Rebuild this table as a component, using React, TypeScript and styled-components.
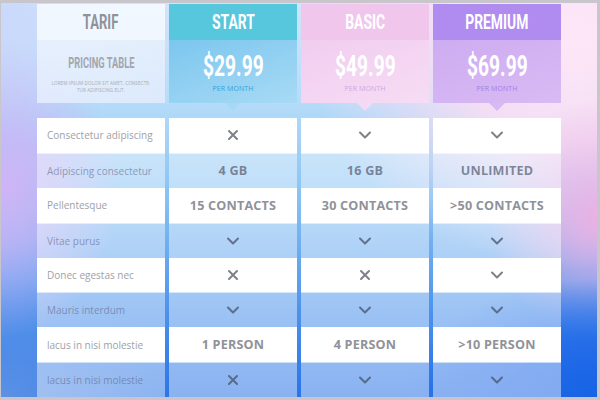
import styled, { createGlobalStyle } from 'styled-components';

const GlobalStyle = createGlobalStyle`
  html, body {
    margin: 0;
    padding: 0;
  }
  body {
    font-family: 'Open Sans', 'Liberation Sans', sans-serif;
  }
`;

const Page = styled.div`
  width: 600px;
  height: 400px;
  box-sizing: border-box;
  border-style: solid;
  border-color: #c9c6cb;
  border-width: 3px 3px 3px 1px;
  overflow: hidden;
  padding: 1px 0 0 36px;
  background:
    radial-gradient(ellipse 32% 30% at 100% 100%, #1663e6 0%, rgba(32, 104, 232, 0.85) 45%, rgba(40, 110, 232, 0) 100%),
    radial-gradient(ellipse 18% 30% at 100% 55%, rgba(238, 176, 228, 0.95) 0%, rgba(238, 176, 228, 0) 100%),
    radial-gradient(ellipse 45% 60% at 96% 8%, #fde7f7 0%, rgba(250, 222, 244, 0.9) 45%, rgba(248, 214, 242, 0) 100%),
    radial-gradient(ellipse 20% 38% at 0% 47%, rgba(208, 180, 246, 1) 0%, rgba(208, 180, 246, 0.7) 40%, rgba(208, 180, 246, 0) 100%),
    radial-gradient(ellipse 30% 30% at 0% 100%, #5c92e6 0%, rgba(92, 146, 230, 0) 100%),
    radial-gradient(ellipse 20% 25% at 0% 5%, #c9d8fb 0%, rgba(201, 216, 251, 0) 100%),
    linear-gradient(180deg, #d2e4fb 0%, #b6dcf9 25%, #86c1f3 50%, #4d93ec 78%, #2a73e6 100%);
`;

const Table = styled.div`
  display: grid;
  grid-template-columns: repeat(4, 128px);
  column-gap: 4px;
`;

type Plan = 'tarif' | 'start' | 'basic' | 'premium';

const titleBg: Record<Plan, string> = {
  tarif: 'rgba(244, 249, 255, 0.9)',
  start: '#56c7dc',
  basic: '#f0c6ec',
  premium: '#b08bf0',
};

const priceBg: Record<Plan, string> = {
  tarif: 'linear-gradient(160deg, rgba(236, 243, 254, 0.85), rgba(226, 236, 252, 0.85))',
  start: 'linear-gradient(160deg, #7cc6ee, #a8daf5)',
  basic: 'linear-gradient(160deg, #f1cdf0, #f6dcf4)',
  premium: 'linear-gradient(160deg, #cdacf1, #d9baf3)',
};

const tipColor: Record<Plan, string> = {
  tarif: 'transparent',
  start: '#a6d9f5',
  basic: '#f5daf3',
  premium: '#d8b9f3',
};

const perMonthColor: Record<Plan, string> = {
  tarif: '#9aa0aa',
  start: '#3a9fd9',
  basic: '#d2a6df',
  premium: '#a47de6',
};

const PlanHead = styled.div`
  display: flex;
  flex-direction: column;
  margin-bottom: 15px;
`;

const PlanTitle = styled.div<{ plan: Plan }>`
  height: 36px;
  display: flex;
  align-items: center;
  justify-content: center;
  background: ${({ plan }) => titleBg[plan]};
  color: ${({ plan }) => (plan === 'tarif' ? '#8f9299' : '#ffffff')};
`;

const Narrow = styled.span<{ size: number; squeeze: number }>`
  display: inline-block;
  font-family: Roboto, 'Liberation Sans', sans-serif;
  font-weight: 700;
  font-size: ${({ size }) => size}px;
  line-height: 1;
  white-space: nowrap;
  transform: scaleX(${({ squeeze }) => squeeze});
`;

const PriceBox = styled.div<{ plan: Plan }>`
  position: relative;
  height: 63px;
  display: flex;
  flex-direction: column;
  align-items: center;
  justify-content: center;
  background: ${({ plan }) => priceBg[plan]};
  color: #ffffff;

  &::after {
    content: '';
    position: absolute;
    left: 50%;
    bottom: -8px;
    margin-left: -8px;
    border-left: 8px solid transparent;
    border-right: 8px solid transparent;
    border-top: 8px solid ${({ plan }) => tipColor[plan]};
  }
`;

const PerMonth = styled.div<{ plan: Plan }>`
  margin-top: 3px;
  font-size: 7px;
  letter-spacing: 0.1px;
  color: ${({ plan }) => perMonthColor[plan]};
`;

const TableName = styled.div`
  color: #a2a6ae;
  margin-top: 2px;
`;

const TableNote = styled.div`
  margin-top: 7px;
  width: 104px;
  font-size: 4.6px;
  line-height: 7px;
  text-align: center;
  color: #a7abb3;
  letter-spacing: 0.1px;
`;

const Cell = styled.div<{ glass: boolean; label?: boolean }>`
  height: 34.875px;
  box-sizing: border-box;
  display: flex;
  align-items: center;
  justify-content: ${({ label }) => (label ? 'flex-start' : 'center')};
  padding-left: ${({ label }) => (label ? '10px' : '0')};
  background: ${({ glass }) => (glass ? 'rgba(255, 255, 255, 0.45)' : '#ffffff')};
  border-top: ${({ glass }) => (glass ? '1px solid rgba(255, 255, 255, 0.55)' : 'none')};
`;

const Label = styled.span<{ glass: boolean }>`
  font-size: 10px;
  color: ${({ glass }) => (glass ? 'rgba(95, 105, 140, 0.62)' : '#9ea1a8')};
`;

const Value = styled.span<{ glass: boolean }>`
  font-size: 12.6px;
  font-weight: 700;
  letter-spacing: 0.2px;
  color: ${({ glass }) => (glass ? 'rgba(85, 95, 115, 0.72)' : '#8f9298')};
`;

const Icon = styled.svg<{ glass: boolean }>`
  display: block;
  stroke: ${({ glass }) => (glass ? 'rgba(70, 82, 105, 0.75)' : '#7d8188')};
  fill: none;
  stroke-width: 2;
  stroke-linecap: round;
  stroke-linejoin: round;
`;

const Cross = ({ glass }: { glass: boolean }) => (
  <Icon glass={glass} width="12" height="12" viewBox="0 0 12 12">
    <path d="M2 2 L10 10 M10 2 L2 10" />
  </Icon>
);

const Check = ({ glass }: { glass: boolean }) => (
  <Icon glass={glass} width="14" height="10" viewBox="0 0 14 10">
    <path d="M2 2.5 L7 7.5 L12 2.5" />
  </Icon>
);

const plans: { plan: Plan; name: string; price: string }[] = [
  { plan: 'start', name: 'START', price: '$29.99' },
  { plan: 'basic', name: 'BASIC', price: '$49.99' },
  { plan: 'premium', name: 'PREMIUM', price: '$69.99' },
];

const rows: { label: string; values: string[] }[] = [
  { label: 'Consectetur adipiscing', values: ['x', 'v', 'v'] },
  { label: 'Adipiscing consectetur', values: ['4 GB', '16 GB', 'UNLIMITED'] },
  { label: 'Pellentesque', values: ['15 CONTACTS', '30 CONTACTS', '>50 CONTACTS'] },
  { label: 'Vitae purus', values: ['v', 'v', 'v'] },
  { label: 'Donec egestas nec', values: ['x', 'x', 'v'] },
  { label: 'Mauris interdum', values: ['v', 'v', 'v'] },
  { label: 'lacus in nisi molestie', values: ['1 PERSON', '4 PERSON', '>10 PERSON'] },
  { label: 'lacus in nisi molestie', values: ['x', 'v', 'v'] },
];

const renderValue = (v: string, glass: boolean) => {
  if (v === 'x') return <Cross glass={glass} />;
  if (v === 'v') return <Check glass={glass} />;
  return <Value glass={glass}>{v}</Value>;
};

export default function App() {
  return (
    <>
      <GlobalStyle />
      <Page>
        <Table>
          <PlanHead>
            <PlanTitle plan="tarif">
              <Narrow size={21} squeeze={0.62}>TARIF</Narrow>
            </PlanTitle>
            <PriceBox plan="tarif">
              <TableName>
                <Narrow size={15} squeeze={0.62}>PRICING TABLE</Narrow>
              </TableName>
              <TableNote>LOREM IPSUM DOLOR SIT AMET, CONSECTE-TUR ADIPISCING ELIT.</TableNote>
            </PriceBox>
          </PlanHead>
          {plans.map((p) => (
            <PlanHead key={p.plan}>
              <PlanTitle plan={p.plan}>
                <Narrow size={21} squeeze={0.66}>{p.name}</Narrow>
              </PlanTitle>
              <PriceBox plan={p.plan}>
                <Narrow size={30} squeeze={0.64}>{p.price}</Narrow>
                <PerMonth plan={p.plan}>PER MONTH</PerMonth>
              </PriceBox>
            </PlanHead>
          ))}
          {rows.map((r, i) => {
            const glass = i % 2 === 1;
            return [
              <Cell key={`l${i}`} glass={glass} label>
                <Label glass={glass}>{r.label}</Label>
              </Cell>,
              ...r.values.map((v, j) => (
                <Cell key={`v${i}-${j}`} glass={glass}>
                  {renderValue(v, glass)}
                </Cell>
              )),
            ];
          })}
        </Table>
      </Page>
    </>
  );
}
